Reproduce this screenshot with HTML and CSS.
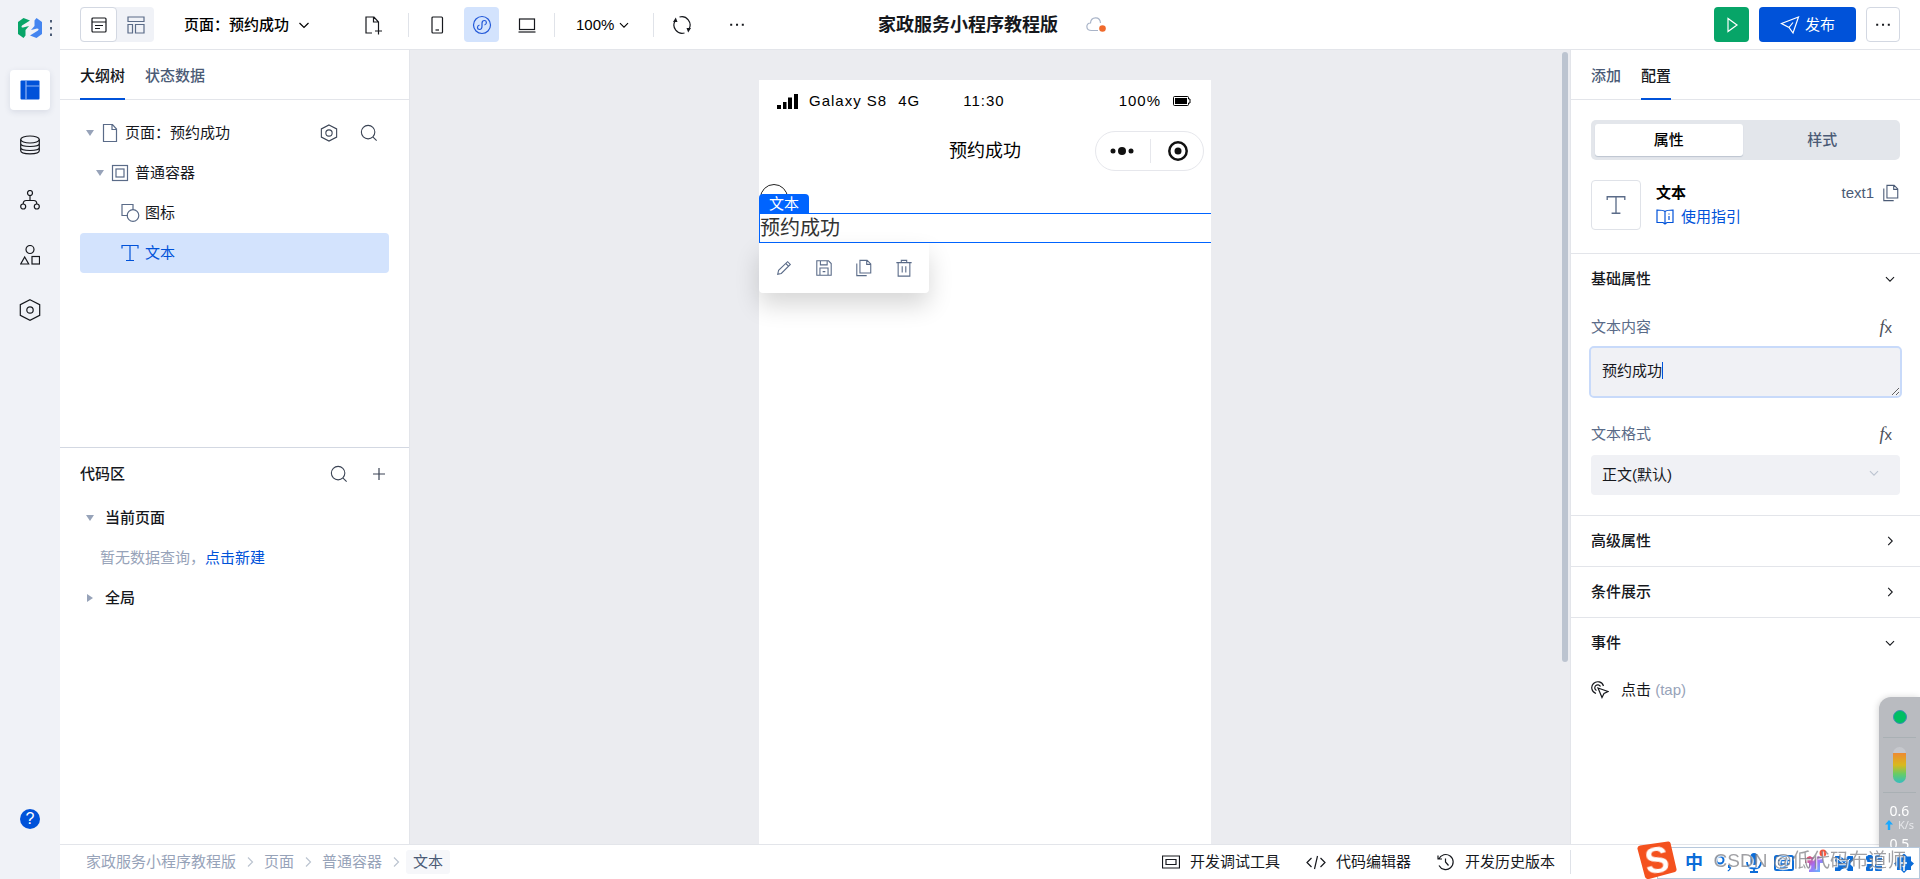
FILE: index.html
```html
<!DOCTYPE html>
<html lang="zh-CN">
<head>
<meta charset="utf-8">
<title>家政服务小程序教程版</title>
<link rel="stylesheet" href="styles.css">
</head>
<body>
<svg class="sprite" aria-hidden="true">
  <symbol id="chev-down" viewBox="0 0 20 20"><path d="M5.5 8l4.500 4.500L14.500 8"/></symbol>
  <symbol id="chev-right" viewBox="0 0 20 20"><path d="M8 5.500l4.500 4.500L8 14.500"/></symbol>
  <symbol id="search" viewBox="0 0 20 20"><circle cx="9" cy="9" r="7.500"/><path d="M14.500 14.500l4 4"/></symbol>
  <symbol id="hexagon" viewBox="0 0 20 20"><path d="M10 1l8.500 4.500v9L10 19l-8.500-4.500v-9z"/><circle cx="10" cy="10" r="3.500"/></symbol>
  <symbol id="copy" viewBox="0 0 20 20"><path d="M5.500 1.500h8l4 4v10h-12zM13 1.500v4.500h4.500M2 5v13.500h11"/></symbol>
  <symbol id="letter-t" viewBox="0 0 20 20"><path d="M2 5.500V2.500h16v3M10 2.500v15M6 17.500h8"/></symbol>
  <symbol id="dots" viewBox="0 0 20 20"><path d="M1.500 8.500h2.500V11H1.500zM8.800 8.500h2.500V11H8.800zM16 8.500h2.500V11H16z" fill="currentColor" stroke="none"/></symbol>
</svg>
<div class="app">
  <nav class="rail" aria-label="主导航">
    <div class="brand">
      <svg class="logo" viewBox="0 0 24 20"><path d="M0 4L5.500 0 12 2.500 4 7.500Q2.500 9.500 5 9.500L11 8l-3.500 4v5.500L5.500 20 0 16z" fill="#07a568"/><path d="M24 16l-5.500 4-6.500-2.500 8-5q1.500-2-1-2L13 12l3.500-4V2.500L18.500 0 24 4z" fill="#4485f0"/></svg>
      <svg class="brand-dots" viewBox="0 0 4 16"><path d="M1 0h2v2.500H1zM1 7h2v2.500H1zM1 13.500h2V16H1z" fill="#4b5b76"/></svg>
    </div>
    <div class="rail-list">
      <button class="rail-btn rail-on" aria-label="设计"><svg class="icon" viewBox="0 0 20 20"><rect x="0.500" y="0.500" width="19" height="19" rx="1" fill="#0052d9" stroke="none"/><path d="M6 0.500v19M6 6h14" stroke="#8fb5f5"/></svg></button>
      <button class="rail-btn" aria-label="数据源"><svg class="icon" viewBox="0 0 20 20"><ellipse cx="10" cy="4.500" rx="9.300" ry="3.500"/><path d="M.7 4.500v11c0 4.500 18.600 4.500 18.600 0v-11M.7 8.500c0 4 18.600 4 18.600 0M.7 12.500c0 4 18.600 4 18.600 0"/></svg></button>
      <button class="rail-btn" aria-label="流程"><svg class="icon" viewBox="0 0 20 20"><circle cx="10" cy="3" r="2.500"/><circle cx="3.200" cy="16.500" r="2.500"/><circle cx="16.800" cy="16.500" r="2.500"/><path d="M10 5.500v5M3.200 14c0-3 1-3.500 3-3.500h7.600c2 0 3 .5 3 3.500"/></svg></button>
      <button class="rail-btn" aria-label="组件"><svg class="icon" viewBox="0 0 20 20"><circle cx="10" cy="4.500" r="4"/><path d="M4.700 12l4 7H.7z"/><rect x="12" y="11.500" width="7.500" height="7.500"/></svg></button>
      <button class="rail-btn" aria-label="设置"><svg class="icon icon-22" viewBox="0 0 22 22"><path d="M11 .7l9.700 5v10.600l-9.700 5-9.700-5V5.700z"/><circle cx="11" cy="11" r="3.200"/></svg></button>
    </div>
    <button class="help" aria-label="帮助">?</button>
  </nav>

  <div class="workspace">
    <header class="topbar">
      <div class="tools">
        <div class="toggle">
          <button class="toggle-btn toggle-on" aria-label="页面视图"><svg class="icon icon-16" viewBox="0 0 16 16"><rect x="1" y="1" width="14" height="14" rx="1"/><path d="M1 5h14M4 8.500h8M4 11.500h5"/></svg></button>
          <button class="toggle-btn" aria-label="布局视图"><svg class="icon icon-18 slate" viewBox="0 0 18 18"><path d="M1 1h16v4.500H1zM1 8.500h4.500V17H1zM8.500 8.500H17V17H8.500z"/></svg></button>
        </div>
        <button class="page-pick">页面：预约成功<svg class="icon"><use href="#chev-down"/></svg></button>
        <button class="tool tool-new" aria-label="新建页面"><svg class="icon" viewBox="0 0 20 20"><path d="M9 18H3V2h8l4.500 5v6M10.500 2v5h5M12 16h7M15.500 12.500v7"/></svg></button>
        <span class="bar-line"></span>
        <button class="tool" aria-label="手机"><svg class="icon icon-18" viewBox="0 0 18 18"><rect x="4" y="1" width="10.500" height="16" rx="1"/><path d="M7.500 14h3.500"/></svg></button>
        <button class="tool tool-on" aria-label="小程序"><svg class="icon" viewBox="0 0 20 20"><circle cx="10" cy="10" r="8.500"/><path d="M7.500 10C4.500 11 5 14.500 7.500 14.500S10 12.500 10 11V8.500C10 7 10.500 5.500 12.500 5.500s3 3.500 0 4.500"/></svg></button>
        <button class="tool" aria-label="电脑"><svg class="icon icon-18" viewBox="0 0 18 18"><rect x="1.500" y="3" width="15" height="10.500"/><path d="M.5 16h17"/></svg></button>
        <span class="bar-line"></span>
        <button class="zoom">100%<svg class="icon icon-18"><use href="#chev-down"/></svg></button>
        <span class="bar-line"></span>
        <button class="tool tool-sync" aria-label="刷新"><svg class="icon" viewBox="0 0 20 20"><path d="M7.500 2a8.300 8.300 0 0 1 9.500 12M12.500 18A8.300 8.300 0 0 1 3 6"/><path d="M1 7l2.800-4.500L5.500 7zM19 13l-2.800 4.500L14.500 13z" fill="currentColor" stroke="none"/></svg></button>
        <button class="tool" aria-label="更多"><svg class="icon icon-16"><use href="#dots"/></svg></button>
      </div>
      <div class="app-name">
        <h1 class="app-title">家政服务小程序教程版</h1>
        <svg class="icon" viewBox="0 0 20 20"><path d="M12 15.500H5.500C-.5 15.500-.5 8 4.500 8 5 1.500 14 1 14.500 8" stroke="#a9b4c8"/><circle cx="16.500" cy="13.500" r="3.300" fill="#f06a2c" stroke="none"/></svg>
      </div>
      <div class="actions">
        <button class="btn-play" aria-label="预览"><svg class="icon" viewBox="0 0 20 20"><path d="M6 3.500v13l9-6.500z"/></svg></button>
        <button class="btn-publish"><svg class="icon" viewBox="0 0 20 20"><path d="M1.500 8.500L18.500 2l-5.500 16-4-5.500zM9 12.500l4-5"/></svg>发布</button>
        <button class="btn-more" aria-label="更多操作"><svg class="icon icon-16"><use href="#dots"/></svg></button>
      </div>
    </header>

    <div class="panes">
      <aside class="outline">
        <section class="outline-top">
          <div class="tabs"><button class="tab tab-on">大纲树</button><button class="tab">状态数据</button></div>
          <div class="tree">
            <div class="row"><span class="arrow"></span><svg class="icon slate" viewBox="0 0 20 20"><path d="M3.500 1.500h9l4 4.500v12.500h-13zM12 1.500v5h4.500"/></svg><span class="row-text">页面：预约成功</span>
              <button class="mini" aria-label="页面设置"><svg class="icon icon-18"><use href="#hexagon"/></svg></button>
              <button class="mini" aria-label="搜索"><svg class="icon icon-18"><use href="#search"/></svg></button></div>
            <div class="row level-1"><span class="arrow"></span><svg class="icon slate" viewBox="0 0 20 20"><rect x="2.500" y="2.500" width="15" height="15"/><rect x="6" y="6" width="8" height="8"/></svg><span class="row-text">普通容器</span></div>
            <div class="row level-2"><svg class="icon slate" viewBox="0 0 20 20"><path d="M8 12.500H2v-11h11V7"/><circle cx="13" cy="12.500" r="5.800"/></svg><span class="row-text">图标</span></div>
            <div class="row level-2 row-on"><svg class="icon"><use href="#letter-t"/></svg><span class="row-text">文本</span></div>
          </div>
        </section>
        <section class="code-area">
          <div class="code-head"><h2 class="heading">代码区</h2>
            <button class="mini" aria-label="搜索代码"><svg class="icon icon-18"><use href="#search"/></svg></button>
            <button class="mini" aria-label="新建代码"><svg class="icon icon-18" viewBox="0 0 18 18"><path d="M9 3v12M3 9h12"/></svg></button></div>
          <div class="row"><span class="arrow"></span><strong class="group-name">当前页面</strong></div>
          <p class="empty">暂无数据查询，<a class="link" href="#new">点击新建</a></p>
          <div class="row"><span class="arrow arrow-shut"></span><strong class="group-name">全局</strong></div>
        </section>
      </aside>

      <main class="canvas">
        <div class="stage">
          <div class="phone">
            <div class="status">
              <div class="carrier"><svg class="signal" viewBox="0 0 21 15"><path d="M0 11h4v4H0zM6 8h3.500v7H6zM11 3.500h4V15h-4zM17 0h4v15h-4z" fill="#000"/></svg><span>Galaxy S8</span><span>4G</span></div>
              <span>11:30</span>
              <div class="charge"><span>100%</span><svg class="battery" viewBox="0 0 18 10"><path d="M1.500.5h13q1 0 1 1V3h1.500v4h-1.500v1.500q0 1-1 1h-13q-1 0-1-1v-7q0-1 1-1z" fill="none" stroke="#000"/><path d="M2 2h12v6H2z" fill="#000"/></svg></div>
            </div>
            <div class="titlebar"><span></span><span class="titlebar-text">预约成功</span>
              <div class="capsule"><svg class="cap-dots" viewBox="0 0 24 20"><circle cx="3" cy="10" r="2.500"/><circle cx="12" cy="10" r="4"/><circle cx="21" cy="10" r="2.500"/></svg><span class="cap-line"></span><svg class="cap-ring" viewBox="0 0 22 22"><circle cx="11" cy="11" r="8.700" fill="none" stroke="#111" stroke-width="2.500"/><circle cx="11" cy="11" r="3.500"/></svg></div>
            </div>
            <svg class="done-icon" viewBox="0 0 30 30"><circle cx="15" cy="15" r="13.500"/></svg>
            <div class="selected">
              <span class="sel-tag">文本</span>
              <span>预约成功</span>
              <div class="sel-tools">
                <button class="sel-btn" aria-label="编辑"><svg class="icon icon-18" viewBox="0 0 20 20"><path d="M3 17l1-4.500L14 3l3 3L7 16zM12 5l3 3"/></svg></button>
                <button class="sel-btn" aria-label="保存"><svg class="icon icon-18" viewBox="0 0 20 20"><path d="M2 2h13l3 3v13H2zM6 2v4.500h7.500V2M5.500 18v-8h9v8M8.500 14h3"/></svg></button>
                <button class="sel-btn" aria-label="复制"><svg class="icon icon-18"><use href="#copy"/></svg></button>
                <button class="sel-btn" aria-label="删除"><svg class="icon icon-18" viewBox="0 0 20 20"><path d="M1.500 4h17M3.500 4v15h13V4M7 4V1.500h6V4M8 8v7M12 8v7"/></svg></button>
              </div>
            </div>
          </div>
        </div>
        <div class="track"><div class="thumb"></div></div>
      </main>

      <aside class="config">
        <div class="tabs"><button class="tab">添加</button><button class="tab tab-on">配置</button></div>
        <div class="intro">
          <div class="segment"><button class="seg seg-on">属性</button><button class="seg">样式</button></div>
          <div class="comp">
            <div class="comp-pic"><svg class="icon icon-22"><use href="#letter-t"/></svg></div>
            <div class="comp-info"><strong class="comp-name">文本</strong><a class="guide" href="#guide"><svg class="icon icon-18" viewBox="0 0 18 18"><path d="M9 3.500C8 2.500 5 2 1 2v12.500h6l2 1.500 2-1.500h6V2c-4 0-7 .5-8 1.500zM9 3.500V16M13 8v4M13 5.500v1"/></svg>使用指引</a></div>
            <button class="comp-id">text1<svg class="icon icon-18"><use href="#copy"/></svg></button>
          </div>
        </div>
        <section class="group">
          <button class="group-head">基础属性<svg class="icon icon-18"><use href="#chev-down"/></svg></button>
          <div class="fields">
            <div class="field-head"><label for="content">文本内容</label><button class="fx" aria-label="绑定文本内容"><i class="fx-f">f</i>x</button></div>
            <div class="content-wrap"><textarea id="content" class="content-box" rows="1">预约成功</textarea><span class="caret"></span></div>
            <div class="field-head"><label for="format">文本格式</label><button class="fx" aria-label="绑定文本格式"><i class="fx-f">f</i>x</button></div>
            <div class="select-wrap"><select id="format" class="select-box"><option>正文(默认)</option></select><svg class="icon icon-18 select-chev"><use href="#chev-down"/></svg></div>
          </div>
        </section>
        <section class="group"><button class="group-head">高级属性<svg class="icon icon-18"><use href="#chev-right"/></svg></button></section>
        <section class="group"><button class="group-head">条件展示<svg class="icon icon-18"><use href="#chev-right"/></svg></button></section>
        <section class="group"><button class="group-head">事件<svg class="icon icon-18"><use href="#chev-down"/></svg></button>
          <button class="event"><svg class="icon icon-18" viewBox="0 0 18 18"><path d="M5 12.500A6 6 0 1 1 12.500 5M5.500 9.500A3 3 0 1 1 9.500 5.500M7 7l10 3.500-4 2-2 4z"/></svg><span>点击 <span class="muted">(tap)</span></span></button>
        </section>
      </aside>
    </div>

    <footer class="footer">
      <nav class="crumbs" aria-label="层级"><a class="crumb" href="#app">家政服务小程序教程版</a><svg class="icon"><use href="#chev-right"/></svg><a class="crumb" href="#page">页面</a><svg class="icon"><use href="#chev-right"/></svg><a class="crumb" href="#box">普通容器</a><svg class="icon"><use href="#chev-right"/></svg><span class="crumb-here">文本</span></nav>
      <div class="dev-tools">
        <button class="dev"><svg class="icon icon-18" viewBox="0 0 18 18"><path d="M.5 3h17v12H.5zM4 6.500h10v5H4z"/></svg>开发调试工具</button>
        <button class="dev"><svg class="icon" viewBox="0 0 20 20"><path d="M5.500 6L1 10.500 5.500 15M14.500 6l4.500 4.500-4.500 4.500M11.500 4l-3 13"/></svg>代码编辑器</button>
        <button class="dev"><svg class="icon icon-18" viewBox="0 0 18 18"><path d="M1 2.500V6h4M1.800 6A7.500 7.500 0 1 1 2 12.500M8.500 5.500V9l3 3.500"/></svg>开发历史版本</button>
      </div>
    </footer>
  </div>
</div>

<div class="monitor">
  <div class="mon-cell"><span class="mon-dot"></span></div>
  <div class="mon-cell mon-mid"><span class="mon-tube"></span></div>
  <div class="mon-speed"><span>0.6</span><span class="mon-unit"><svg class="mon-up" viewBox="0 0 8 10"><path d="M4 0l4 4.500H5.200V10H2.800V4.500H0z" fill="#19a9ff"/></svg>K/s</span><span class="mon-next">0.5</span></div>
</div>

<div class="ime">
  <svg class="ime-logo" viewBox="0 0 40 38"><path d="M3 4.500L31 .5q2-.3 2.500 1.500L39.500 28q.5 2-1.500 3L12 38q-3 .5-4-2L.5 8Q0 5 3 4.500z" fill="#f4511e"/><text x="20" y="32" transform="rotate(-8 20 20)" text-anchor="middle" class="ime-s">S</text></svg>
  <div class="ime-keys">
    <span class="ime-lang">中</span>
    <svg class="ime-icon" viewBox="0 0 20 20"><circle cx="6" cy="7" r="3.500" fill="none" stroke="#0b6cd8" stroke-width="2"/><path d="M14 12h3.500q0 5-3.500 6.500l-.5-1q2-1 2-2.500H14z"/></svg>
    <svg class="ime-icon" viewBox="0 0 20 20"><rect x="6.500" y="0" width="7" height="12" rx="3.500"/><path d="M3 9q0 6.500 7 6.500T17 9M10 15v4M6 19h8" fill="none" stroke="#0b6cd8" stroke-width="1.800"/></svg>
    <svg class="ime-icon" viewBox="0 0 20 20"><rect x="1" y="3" width="18" height="14" rx="1.500" fill="none" stroke="#0b6cd8" stroke-width="2"/><path d="M4 7.500h12M4 11h12M6 14h8M7 5v7M13 5v7" stroke="#0b6cd8" stroke-width="1.500"/></svg>
    <svg class="ime-icon" viewBox="0 0 20 20"><defs><linearGradient id="shirt" x1="0" y1="0" x2="1" y2="1"><stop offset="0" stop-color="#f2423c"/><stop offset=".5" stop-color="#a56cf5"/><stop offset="1" stop-color="#55c8ff"/></linearGradient></defs><path d="M1 5l5-2q4 3 8 0l5 2v5h-3v9H5v-9H1z" fill="url(#shirt)"/><circle cx="19" cy="0" r="3.500" fill="#ff4e33"/></svg>
    <svg class="ime-icon" viewBox="0 0 20 20"><path d="M1 3h5l4 3 4-3h5v5l-3 3 3 3v4h-5l-2-2H8l-2 2H1v-4l3-3-3-3z"/><path d="M4 6l6 5 6-5" fill="none" stroke="#fff"/></svg>
    <svg class="ime-icon" viewBox="0 0 20 20"><rect x="2" y="2" width="7" height="7" rx="2"/><rect x="11" y="2" width="7" height="7" rx="2"/><rect x="2" y="11" width="7" height="7" rx="1"/><rect x="11" y="11" width="7" height="7" rx="1"/></svg>
    <svg class="ime-icon" viewBox="0 0 20 20"><path d="M10 0l3 3.500h4V8l3 2.500-3 3V17h-4l-3 3-3-3H3v-3.500l-3-3L3 8V3.500h4z"/><path d="M10 7v11M7 10h6" stroke="#fff" stroke-width="1.500"/></svg>
  </div>
</div>
<div class="credit">CSDN @低代码布道师</div>
</body>
</html>
```
FILE: styles.css
```css
* { box-sizing: border-box; }

body {
  margin: 0;
  font: 15px/20px "Liberation Sans", "Noto Sans CJK SC", sans-serif;
  color: #16181d;
  overflow: hidden;
}

button, select, textarea { font: inherit; color: inherit; }
button {
  margin: 0;
  padding: 0;
  border: 0;
  background: none;
  display: flex;
  align-items: center;
  justify-content: center;
}
a { text-decoration: none; color: #0052d9; }
h1, h2, p { margin: 0; }

.sprite { display: none; }
.icon { width: 20px; height: 20px; flex: none; fill: none; stroke: currentColor; stroke-width: 1.2; }
.icon-16 { width: 16px; height: 16px; }
.icon-18 { width: 18px; height: 18px; }
.icon-22 { width: 22px; height: 22px; }
.slate { color: #5a6b88; }
.muted { color: #97a3b9; }

.app { display: grid; grid-template-columns: 60px minmax(0, 1fr); height: 100vh; }

/* Left rail */
.rail { display: flex; flex-direction: column; align-items: center; background: #f0f2f7; padding: 18px 0 50px; }
.brand { display: flex; gap: 7px; align-items: center; align-self: flex-end; padding-right: 7px; }
.logo { width: 24px; height: 20px; }
.brand-dots { width: 4px; height: 16px; }
.rail-list { display: flex; flex-direction: column; gap: 15px; margin-top: 32px; }
.rail-btn { width: 40px; height: 40px; border-radius: 4px; }
.rail-on { background: #fff; box-shadow: 0 2px 6px rgba(40, 60, 100, .12); }
.help { margin-top: auto; width: 20px; height: 20px; border-radius: 50%; background: #0052d9; color: #fff; font-size: 16px; }

.workspace { display: flex; flex-direction: column; min-width: 0; min-height: 0; }

/* Top bar */
.topbar {
  display: grid;
  grid-template-columns: 1fr auto 1fr;
  align-items: center;
  height: 50px;
  padding: 0 20px;
  border-bottom: 1px solid #e3e5ea;
  flex: none;
}
.tools { display: flex; align-items: center; }
.toggle { display: flex; background: #f0f2f7; border-radius: 4px; }
.toggle-btn { width: 37px; height: 35px; }
.toggle-on { background: #fff; border: 1px solid #d3d8e2; border-radius: 4px; }
.page-pick { font-weight: 500; margin: 0 41px 0 30px; gap: 5px; color: #000; }
.tool { width: 35px; height: 35px; border-radius: 4px; margin-right: 10px; }
.tool-new { margin-right: 18px; }
.tool-sync { margin-right: 20px; }
.tool-on { background: #d3e3fd; color: #2258d8; }
.bar-line { width: 1px; height: 24px; background: #e0e3e9; margin-right: 10px; }
.zoom { gap: 1px; margin: 0 20px 0 11px; color: #000; }
.app-name { display: flex; align-items: center; gap: 28px; padding-left: 4px; }
.app-title { font-size: 18px; line-height: 24px; font-weight: 700; }
.actions { display: flex; justify-content: flex-end; gap: 10px; }
.btn-play, .btn-publish, .btn-more { height: 35px; border-radius: 4px; }
.btn-play { width: 35px; background: #07a568; color: #fff; }
.btn-publish { width: 97px; gap: 5px; background: #0052d9; color: #fff; }
.btn-more { width: 34px; border: 1px solid #d3d8e2; }

.panes { flex: 1; display: grid; grid-template-columns: 350px minmax(0, 1fr) 350px; min-height: 0; }

.tabs { display: flex; gap: 20px; height: 50px; padding: 0 20px; border-bottom: 1px solid #e3e5ea; flex: none; }
.tab { height: 50px; padding-top: 4px; border-bottom: 2px solid transparent; color: #4b5b76; font-weight: 500; }
.tab-on { border-color: #0052d9; color: #16181d; }

/* Outline */
.outline { display: grid; grid-template-rows: 1fr 1fr; border-right: 1px solid #e3e5ea; }
.tree { padding: 13px 20px; }
.row { display: flex; align-items: center; height: 40px; padding-left: 5px; border-radius: 4px; }
.row-text { margin-left: 5px; margin-right: auto; }
.arrow { width: 8px; height: 6px; margin: 0 6px 0 1px; border: 4px solid transparent; border-top: 6px solid #97a3b9; border-bottom: 0; }
.arrow-shut { width: 6px; height: 8px; margin: 0 7px 0 2px; border: 4px solid transparent; border-left: 6px solid #97a3b9; border-right: 0; }
.level-1 { padding-left: 15px; }
.level-2 { padding-left: 40px; }
.row-on { background: #d3e3fd; color: #0052d9; }
.mini { width: 40px; height: 40px; color: #3a4354; }
.code-area { padding: 6px 10px 0 20px; border-top: 1px solid #d3d8e2; }
.code-head { display: flex; align-items: center; height: 40px; margin-bottom: 4px; }
.heading { font-size: 15px; line-height: 20px; font-weight: 500; margin-right: auto; }
.group-name { font-weight: 500; margin-left: 5px; }
.empty { height: 40px; line-height: 40px; padding-left: 20px; color: #97a3b9; }

/* Canvas */
.canvas { display: flex; background: #ebecf0; min-height: 0; }
.stage { flex: 1; display: flex; justify-content: center; padding-top: 30px; }
.track { width: 10px; padding: 2px 2px 0; }
.thumb { height: 77%; border-radius: 3px; background: #bcc4d0; }
.phone { width: 452px; background: #fff; }
.status {
  display: grid;
  grid-template-columns: 1fr auto 1fr;
  align-items: center;
  height: 42px;
  padding: 0 20px 0 18px;
  letter-spacing: 1px;
  color: #000;
}
.carrier { display: flex; align-items: center; gap: 11px; }
.signal { width: 21px; height: 15px; }
.charge { display: flex; align-items: center; justify-content: flex-end; gap: 12px; }
.battery { width: 18px; height: 10px; }
.titlebar { display: grid; grid-template-columns: 1fr auto 1fr; align-items: center; height: 58px; padding: 0 7px; color: #000; }
.titlebar-text { font-size: 18px; line-height: 24px; }
.capsule { justify-self: end; width: 109px; height: 40px; display: flex; align-items: center; justify-content: space-between; padding: 0 14px; border: 1px solid #e6e7ec; border-radius: 20px; fill: #111; }
.cap-dots { width: 24px; height: 20px; }
.cap-line { width: 1px; height: 24px; background: #e6e7ec; }
.cap-ring { width: 22px; height: 22px; }
.done-icon { display: block; width: 30px; height: 30px; margin: 3px 0 0; fill: none; stroke: #222; }
.selected { position: relative; height: 30px; border: 1px solid #0064ff; border-right: 0; font-size: 20px; line-height: 28px; color: #333; }
.sel-tag { position: absolute; left: -1px; bottom: 100%; width: 50px; height: 20px; font-size: 15px; line-height: 20px; text-align: center; color: #fff; background: #0064ff; border-radius: 4px 4px 0 0; }
.sel-tools { position: absolute; left: -1px; top: 100%; margin-top: 1px; display: flex; padding: 5px; background: #fff; border-radius: 0 0 4px 4px; box-shadow: 0 12px 24px rgba(0, 0, 0, .16); }
.sel-btn { width: 40px; height: 40px; color: #5a6b88; }

/* Config */
.config { border-left: 1px solid #e3e5ea; overflow: hidden; }
.intro { padding: 20px 20px 23px; }
.segment { display: grid; grid-template-columns: 1fr 1fr; gap: 6px; height: 40px; padding: 4px; border-radius: 5px; background: #e3e6eb; font-weight: 500; }
.seg { color: #4b5b76; }
.seg-on { background: #fff; color: #000; border-radius: 3px; box-shadow: 0 1px 1px #bcc4d0; }
.comp { display: flex; align-items: flex-start; margin-top: 20px; }
.comp-pic { width: 50px; height: 50px; display: flex; align-items: center; justify-content: center; border: 1px solid #dfe2e8; border-radius: 4px; color: #5a6b88; }
.comp-info { display: flex; flex-direction: column; gap: 4px; margin: 3px auto 0 15px; }
.comp-name { color: #000; }
.guide { display: flex; align-items: center; gap: 7px; }
.comp-id { gap: 8px; margin-top: 3px; color: #4b5b76; }
.group { border-top: 1px solid #e3e5ea; }
.group-head { width: 100%; height: 50px; padding: 0 21px 0 20px; justify-content: space-between; font-weight: 500; }
.fields { padding: 8px 20px 20px; }
.field-head { display: flex; align-items: center; justify-content: space-between; height: 30px; padding-right: 8px; margin-bottom: 6px; color: #5a6b88; }
.fx { align-items: baseline; color: #4b4f5a; font-size: 15px; }
.fx-f { font: italic 18px/20px "Liberation Serif", serif; }
.content-wrap { position: relative; margin-bottom: 23px; }
.content-box {
  display: block;
  width: 100%;
  height: 48px;
  padding: 13px 11px;
  border: 0;
  border-radius: 3px;
  outline: 2px solid #c8dafa;
  background: #f0f1f5;
  resize: vertical;
  overflow: hidden;
}
.caret { position: absolute; left: 71px; top: 14px; width: 1px; height: 17px; background: #0052d9; }
.select-wrap { position: relative; }
.select-box { display: block; width: 100%; height: 40px; padding: 0 11px; border: 0; border-radius: 4px; background: #f0f1f5; appearance: none; }
.select-chev { position: absolute; right: 17px; top: 9px; color: #bcc4d0; }
.event { gap: 12px; height: 44px; padding-left: 20px; }

/* Footer */
.footer { display: flex; align-items: center; justify-content: space-between; height: 35px; flex: none; padding-left: 26px; border-top: 1px solid #e3e5ea; background: #fff; }
.crumbs { display: flex; align-items: center; gap: 4px; color: #bcc4d0; }
.crumb { color: #97a3b9; }
.crumb-here { padding: 2px 7px; margin-left: -4px; border-radius: 3px; background: #f6f7fa; color: #4b5b76; }
.dev-tools { display: flex; gap: 26px; height: 24px; padding-right: 15px; margin-right: 349px; border-right: 1px solid #dfe2e8; }
.dev { gap: 10px; }

/* Floating system monitor */
.monitor { position: fixed; right: 0; bottom: 32px; width: 41px; height: 150px; overflow: hidden; background: #b9bbc0; border-radius: 12px 0 0 0; box-shadow: -1px 0 6px rgba(0, 0, 0, .15); color: #fff; padding: 0 4px; }
.mon-cell { display: flex; justify-content: center; align-items: center; height: 41px; border-bottom: 1px solid #a9b0b4; }
.mon-mid { height: 55px; }
.mon-dot { width: 14px; height: 14px; border-radius: 50%; background: #00bf63; border: 1px solid #3f8fb5; }
.mon-tube { width: 13px; height: 36px; border-radius: 7px; background: linear-gradient(#c6c8cd 0 6px, #ee8a31 6px, #d9b91c 18px, #66cc66 27px, #35bdc0); }
.mon-speed { display: flex; flex-direction: column; align-items: center; padding-top: 10px; font: 14px/16px "Noto Sans", sans-serif; }
.mon-unit { display: flex; align-items: center; gap: 5px; font-size: 11px; line-height: 12px; color: #e6e7ea; }
.mon-up { width: 8px; height: 10px; }
.mon-next { margin-top: 5px; }

/* Floating input-method bar */
.ime { position: fixed; right: 0; bottom: 0; display: flex; align-items: flex-end; }
.ime-logo { width: 40px; height: 38px; margin-right: -20px; z-index: 1; }
.ime-s { font: 700 36px "Liberation Sans", sans-serif; fill: #fff; }
.ime-keys { display: flex; align-items: center; gap: 10px; height: 32px; padding: 0 5px 0 26px; background: #fff; border: 1px solid #b6c8dc; fill: #0b6cd8; }
.ime-lang { width: 20px; font-size: 18px; font-weight: 700; text-align: center; color: #0b6cd8; }
.ime-icon { width: 20px; height: 20px; overflow: visible; }
.credit { position: fixed; right: 14px; bottom: 5px; font-size: 19px; line-height: 26px; color: rgba(120, 120, 125, .7); text-shadow: 1px 1px 1px #fff; }
```
